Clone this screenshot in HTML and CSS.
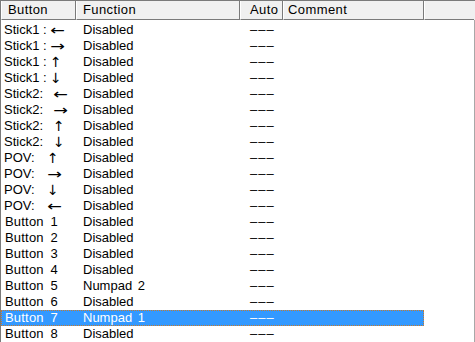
FILE: index.html
```html
<!DOCTYPE html>
<html>
<head>
<meta charset="utf-8">
<link rel="stylesheet" href="styles.css">
</head>
<body>
<div class="list">
  <div class="head">
    <div class="hc c1">Button</div>
    <div class="hc c2">Function</div>
    <div class="hc c3">Auto</div>
    <div class="hc c4">Comment</div>
    <div class="hc c5"></div>
  </div>
  <div class="body">
    <div class="row"><div class="c1"><span class="pf s1">Stick1 :</span><span class="ar h">←</span></div><div class="c2">Disabled</div><div class="c3">–––</div><div class="c4"></div></div>
    <div class="row"><div class="c1"><span class="pf s1">Stick1 :</span><span class="ar h">→</span></div><div class="c2">Disabled</div><div class="c3">–––</div><div class="c4"></div></div>
    <div class="row"><div class="c1"><span class="pf s1">Stick1 :</span><span class="ar v">↑</span></div><div class="c2">Disabled</div><div class="c3">–––</div><div class="c4"></div></div>
    <div class="row"><div class="c1"><span class="pf s1">Stick1 :</span><span class="ar v">↓</span></div><div class="c2">Disabled</div><div class="c3">–––</div><div class="c4"></div></div>
    <div class="row"><div class="c1"><span class="pf s2">Stick2:</span><span class="ar h">←</span></div><div class="c2">Disabled</div><div class="c3">–––</div><div class="c4"></div></div>
    <div class="row"><div class="c1"><span class="pf s2">Stick2:</span><span class="ar h">→</span></div><div class="c2">Disabled</div><div class="c3">–––</div><div class="c4"></div></div>
    <div class="row"><div class="c1"><span class="pf s2">Stick2:</span><span class="ar v">↑</span></div><div class="c2">Disabled</div><div class="c3">–––</div><div class="c4"></div></div>
    <div class="row"><div class="c1"><span class="pf s2">Stick2:</span><span class="ar v">↓</span></div><div class="c2">Disabled</div><div class="c3">–––</div><div class="c4"></div></div>
    <div class="row"><div class="c1"><span class="pf pov">POV:</span><span class="ar v">↑</span></div><div class="c2">Disabled</div><div class="c3">–––</div><div class="c4"></div></div>
    <div class="row"><div class="c1"><span class="pf pov">POV:</span><span class="ar h">→</span></div><div class="c2">Disabled</div><div class="c3">–––</div><div class="c4"></div></div>
    <div class="row"><div class="c1"><span class="pf pov">POV:</span><span class="ar v">↓</span></div><div class="c2">Disabled</div><div class="c3">–––</div><div class="c4"></div></div>
    <div class="row"><div class="c1"><span class="pf pov">POV:</span><span class="ar h">←</span></div><div class="c2">Disabled</div><div class="c3">–––</div><div class="c4"></div></div>
    <div class="row"><div class="c1 btn">Button 1</div><div class="c2">Disabled</div><div class="c3">–––</div><div class="c4"></div></div>
    <div class="row"><div class="c1 btn">Button 2</div><div class="c2">Disabled</div><div class="c3">–––</div><div class="c4"></div></div>
    <div class="row"><div class="c1 btn">Button 3</div><div class="c2">Disabled</div><div class="c3">–––</div><div class="c4"></div></div>
    <div class="row"><div class="c1 btn">Button 4</div><div class="c2">Disabled</div><div class="c3">–––</div><div class="c4"></div></div>
    <div class="row"><div class="c1 btn">Button 5</div><div class="c2">Numpad 2</div><div class="c3">–––</div><div class="c4"></div></div>
    <div class="row"><div class="c1 btn">Button 6</div><div class="c2">Disabled</div><div class="c3">–––</div><div class="c4"></div></div>
    <div class="row sel"><div class="c1 btn">Button 7</div><div class="c2">Numpad 1</div><div class="c3">–––</div><div class="c4"></div></div>
    <div class="row"><div class="c1 btn">Button 8</div><div class="c2">Disabled</div><div class="c3">–––</div><div class="c4"></div></div>
  </div>
</div>
</body>
</html>
```
FILE: styles.css
```css
html, body {
  margin: 0;
  padding: 0;
  background: #fff;
}
body {
  width: 475px;
  height: 342px;
  overflow: hidden;
  font-family: "Liberation Sans", Arial, sans-serif;
  font-size: 13px;
  color: #000;
}
.list {
  border-left: 1px solid #7a7a7a;
  border-top: 1px solid #7a7a7a;
  height: 341px;
  display: flex;
  flex-direction: column;
}
.head {
  display: flex;
  height: 19px;
  background: #f0f0f0;
}
.hc {
  box-sizing: border-box;
  height: 19px;
  line-height: 18px;
  border-left: 1px solid #fff;
  border-right: 1px solid #7a7a7a;
  border-bottom: 1px solid #7a7a7a;
  white-space: nowrap;
  overflow: hidden;
  letter-spacing: 0.4px;
}
.head .c1 { width: 75px; padding-left: 6px; }
.head .c2 { width: 164px; padding-left: 6px; }
.head .c3 { width: 43px; padding-left: 9px; }
.head .c4 { width: 141px; padding-left: 4px; }
.head .c5 { width: 50px; border-right: none; }
.body {
  flex: 1;
  padding-top: 2px;
  border-right: 1px solid #a8a8a8;
  width: 473px;
}
.row {
  display: flex;
  width: 423px;
  height: 16px;
  line-height: 16px;
  box-sizing: border-box;
  white-space: nowrap;
}
.row > div { box-sizing: border-box; }
.row .c1 { width: 75px; padding-left: 3px; }
.row .c1.btn { padding-left: 4px; word-spacing: 3px; letter-spacing: 0.2px; }
.row .c2 { width: 164px; padding-left: 7px; word-spacing: 2px; }
.row .c3 { width: 43px; padding-left: 10px; letter-spacing: 1px; }
.row .c4 { width: 141px; }
.pf { display: inline-block; }
.pf.s1 { width: 46px; }
.pf.s2 { width: 49px; }
.pf.pov { width: 43px; }
.ar {
  display: inline-block;
  text-align: center;
  font-family: "DejaVu Sans", sans-serif;
  font-size: 14px;
  line-height: 16px;
  height: 16px;
  vertical-align: top;
}
.ar.h { width: 15px; transform: scaleX(1.25); }
.ar.v { width: 10px; }
.row.sel {
  background: #3399ff;
  color: #fff;
  outline: 1px dotted #c87a2a;
  outline-offset: -1px;
}
```
